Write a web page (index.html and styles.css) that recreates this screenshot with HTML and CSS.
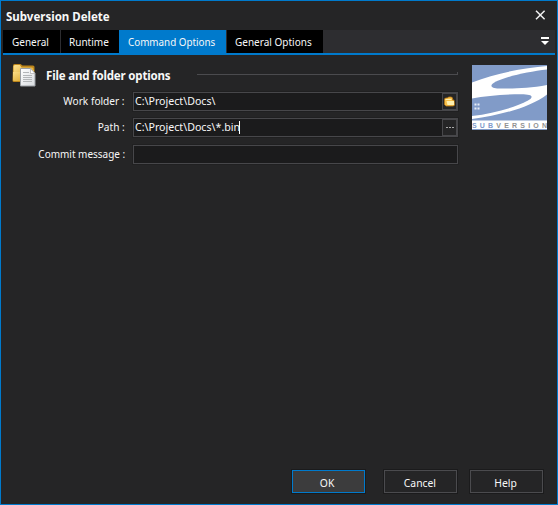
FILE: index.html
```html
<!DOCTYPE html>
<html lang="en">
<head>
<meta charset="utf-8">
<title>Subversion Delete</title>
<link rel="stylesheet" href="styles.css">
</head>
<body>
<main class="dialog">
  <header class="titlebar">
    <h1 class="title">Subversion Delete</h1>
    <svg class="close" width="11" height="10" viewBox="0 0 11 10"><path d="M1 .8l8.6 8.4M9.6 .8L1 9.2" fill="none" stroke="#f1f1f1" stroke-width="1.5"/></svg>
  </header>
  <nav class="tabs">
    <span class="tab tab-general"><b>General</b></span>
    <span class="tab tab-runtime"><b>Runtime</b></span>
    <span class="tab tab-command"><b>Command Options</b></span>
    <span class="tab tab-options"><b>General Options</b></span>
    <svg class="tab-menu" width="8" height="8" viewBox="0 0 8 8"><path d="M0 0h8v2H0zM0 4h8L4 8z" fill="#fff"/></svg>
  </nav>
  <section class="content">
    <div class="form">
      <div class="group">
        <svg class="group-icon" width="24" height="23" viewBox="0 0 24 23">
          <defs>
            <linearGradient id="gold" x2="1" y2="1"><stop stop-color="#ffe391"/><stop offset="1" stop-color="#d39a16"/></linearGradient>
            <linearGradient id="paper" x2="1" y2="1"><stop stop-color="#fff"/><stop offset="1" stop-color="#d8dce0"/></linearGradient>
          </defs>
          <path d="M1 1.500q0-1.500 1.500-1.500h6L10.500 1.500H21q1.500 0 1.500 1.500V18H2q-1.500 0-1.500-1.500z" fill="#bd861b"/>
          <path d="M1.500 2.500q0-1.500 1.500-1.500h5L9.500 3.500H20q1.500 0 1.500 1.500V15H1.500z" fill="url(#gold)"/>
          <path d="M1 8h8l1-2h12v11H2q-1 0-1-1z" fill="url(#gold)"/>
          <path d="M8.500 4.500h10l4.500 5v12.500H8.500z" fill="url(#paper)" stroke="#9b9fa3"/>
          <path d="M18.500 4.500v5H23z" fill="#fff" stroke="#aaa" stroke-width=".7"/>
          <path d="M11 8.500h6M11 11.500h9M11 13.500h9M11 15.500h9M11 17.500h9" stroke="#b3b6b8"/>
        </svg>
        <h2 class="group-title">File and folder options</h2>
        <span class="rule"></span>
      </div>
      <div class="row">
        <label class="label label-work"><b>Work folder :</b></label>
        <div class="field"><span class="value value-work">C:\Project\Docs\</span>
          <span class="browse"><svg width="11" height="11" viewBox="0 0 11 11"><path d="M.5 8.500V3L1.500 2h2l1-1h3L8.500 2v2h1.500l.5 5-1 1H2z" fill="#f8c04a" stroke="#b97a16" stroke-width=".8"/><path d="M2.500 5H10v4H3.500z" fill="#fff0ae"/><path d="M1.500 3.500h6" stroke="#fff0ae"/></svg></span>
        </div>
      </div>
      <div class="row">
        <label class="label label-path"><b>Path :</b></label>
        <div class="field"><span class="value value-path">C:\Project\Docs\*.bin</span><i class="caret"></i>
          <span class="browse"><svg width="8" height="1" viewBox="0 0 8 1"><path d="M0 0h2v1H0zM3 0h2v1H3zM6 0h2v1H6z" fill="#aaa"/></svg></span>
        </div>
      </div>
      <div class="row row-commit">
        <label class="label label-commit"><b>Commit message :</b></label>
        <div class="field"></div>
      </div>
    </div>
    <svg class="logo" width="75" height="65" viewBox="0 0 75 65">
      <path d="M0 0h75v65H0z" fill="#fff"/>
      <path d="M0 0h75v1C52 3 24 8 0 17.500z" fill="#819bc8"/>
      <path d="M75 4.500V20C57 23.500 40 23.500 27 23.500C18 23.500 17 20 24 16.500C36 11 57 6.500 75 4.500z" fill="#819bc8"/>
      <path d="M0 33.500C14 31 32 29.300 49 29.300C61 29.300 62 32 56 35.500C42 43 21 48.500 0 51z" fill="#819bc8"/>
      <path d="M75 29.500V55.500H0V54C30 50 59 42 75 29.500z" fill="#819bc8"/>
      <path d="M0 64h75v1H0z" fill="#819bc8"/>
      <path d="M2.500 38.500h2v2h-2zM5.500 38.500h2v2h-2zM2.500 42.500h2v2h-2zM5.500 42.500h2v2h-2z" fill="#e6ecf6"/>
      <text class="logo-text" x="0" y="62.500" textLength="75"><tspan fill="#7f9bcb">SUB</tspan><tspan fill="#929292">VERSION</tspan></text>
    </svg>
  </section>
  <footer class="actions">
    <span class="button button-ok"><b>OK</b></span>
    <span class="button button-cancel"><b>Cancel</b></span>
    <span class="button button-help"><b>Help</b></span>
  </footer>
</main>
</body>
</html>
```
FILE: styles.css
```css
* { box-sizing: border-box; }
body { margin: 0; background: #252526; }
.dialog {
  width: 558px; height: 505px;
  display: flex; flex-direction: column;
  border: 1px solid #007acc;
  background: #252526; color: #f8f8f8;
  font: 11.5px/16px "Noto Sans", "DejaVu Sans", sans-serif;
  white-space: nowrap;
}
b { display: inline-block; font-weight: normal; }
.titlebar { display: flex; justify-content: space-between; height: 29px; padding: 8px 11px 0 5px; }
.title { margin: 0; font-size: 11.5px; line-height: 16px; }
.close { margin-top: 1px; }
.tabs { display: flex; height: 25px; margin: 0 2px; border-bottom: 2px solid #007acc; background: #2d2d30; }
.tab { height: 23px; line-height: 24px; background: #000; padding-left: 9px; border-right: 1px solid #2d2d30; }
.tab b { transform: scaleX(.87); transform-origin: left; }
.tab-general { width: 58px; }
.tab-runtime { width: 58px; border-right: 0; padding-left: 8px; }
.tab-command { width: 108px; background: #007acc; }
.tab-command b { transform: scaleX(.855); }
.tab-options { width: 96px; border-right: 0; padding-left: 8px; }
.tab-menu { margin: 7px 6px 0 auto; }
.content { flex: 1; display: flex; padding: 9px 10px 0 11px; }
.form { width: 446px; }
.group { display: flex; height: 28px; }
.group-title { width: 151px; margin: 4px 0 0 10px; font-size: 11.5px; line-height: 16px; letter-spacing: -.17px; }
.rule { flex: 1; height: 3px; margin-top: 8px; border: solid #4b4b4e; border-width: 0 1px 1px 0; }
.row { display: flex; height: 26px; }
.row-commit { margin-top: 1px; }
.label { width: 121px; padding-right: 8px; line-height: 18px; display: flex; justify-content: flex-end; }
.label b { transform: scaleX(.88); transform-origin: right; }
.label-commit b { transform: scaleX(.867); }
.field { width: 325px; height: 19px; display: flex; align-items: center; border: 1px solid #47474a; outline: 1px solid #202021; background: #1b1b1c; }
.value { padding-left: 1px; line-height: 15px; padding-bottom: 2px; transform: scaleX(.925); transform-origin: left; }
.value-path { width: 105px; }
.caret { width: 1px; height: 13px; background: #fff; }
.browse { width: 15px; height: 17px; margin-left: auto; display: flex; align-items: center; justify-content: center; border: 1px solid #47474a; background: #252526; }
.logo { margin: 1px 0 0 14px; }
.logo-text { font: bold 7px "Liberation Sans", sans-serif; }
.actions { display: flex; height: 34px; padding-left: 291px; }
.button { height: 23px; display: flex; align-items: center; justify-content: center; padding-top: 2px; border: 1px solid #4b4b4e; outline: 1px solid #1b1b1c; }
.button b { transform: scaleX(.9); }
.button-ok { width: 73px; border-color: #007acc; background: #3c3c3d; padding-right: 2px; }
.button-cancel { width: 73px; margin-left: 19px; padding-right: 2px; }
.button-help { width: 73px; margin-left: 13px; padding-right: 1px; }
```
